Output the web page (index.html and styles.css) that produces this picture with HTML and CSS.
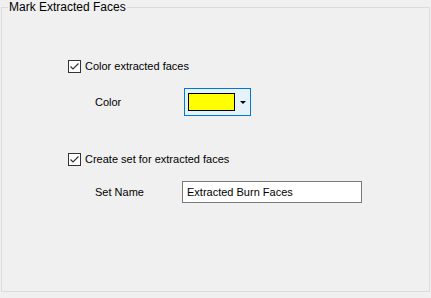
FILE: index.html
```html
<!DOCTYPE html>
<html>
  <head>
    <meta charset="utf-8">
    <title>Mark Extracted Faces</title>
    <link rel="stylesheet" href="styles.css">
  </head>
  <body>
    <fieldset class="group">
      <legend>Mark Extracted Faces</legend>
      <div class="check-row first">
        <span class="check"><svg width="11" height="11" viewBox="0 0 11 11"><path d="M1.5 5.5 L4 8 L9.5 2.5" fill="none" stroke="#333" stroke-width="1.2"/></svg></span>
        <span>Color extracted faces</span>
      </div>
      <div class="field-row color-row">
        <span class="field-label">Color</span>
        <div class="color-pick">
          <span class="swatch"></span>
          <span class="arrow"></span>
        </div>
      </div>
      <div class="check-row second">
        <span class="check"><svg width="11" height="11" viewBox="0 0 11 11"><path d="M1.5 5.5 L4 8 L9.5 2.5" fill="none" stroke="#333" stroke-width="1.2"/></svg></span>
        <span>Create set for extracted faces</span>
      </div>
      <div class="field-row name-row">
        <span class="field-label">Set Name</span>
        <div class="text-box">Extracted Burn Faces</div>
      </div>
    </fieldset>
  </body>
</html>
```

FILE: styles.css
```css
*, *::before, *::after {
  box-sizing: border-box;
}

body {
  margin: 0;
  background: #f0f0f0;
  color: #000;
  font: 11px "Liberation Sans", Arial, sans-serif;
}

.group {
  margin: 0 0 0 1px;
  padding: 0;
  width: 429px;
  height: 292px;
  border: 1px solid #dcdcdc;
}
.group legend {
  margin-left: 6px;
  padding: 0 1px;
  line-height: 14px;
  font-size: 12px;
}

.check-row {display: flex; align-items: center; height: 14px; padding-left: 66px;}
.check-row.first {margin-top: 45px;}
.check-row.second {margin-top: 36px;}
.check {
  width: 13px;
  height: 13px;
  border: 1px solid #333;
  background: #fff;
  margin-right: 4px;
  display: flex;
  align-items: center;
  justify-content: center;
}
.check svg {display: block;}

.field-row {display: flex; align-items: center; padding-left: 93px;}
.field-label {width: 89px;}
.color-row {margin-top: 15px; height: 28px;}
.name-row {margin-top: 15px; height: 22px;}

.color-pick {
  width: 67px;
  height: 28px;
  border: 1px solid #0078d7;
  background: #e5f1fb;
  display: flex;
  align-items: center;
  padding-left: 3px;
}
.swatch {width: 47px; height: 18px; border: 1px solid #000; background: #ffff00;}
.arrow {
  margin: 1px 0 0 5px;
  width: 0;
  height: 0;
  border-left: 3px solid transparent;
  border-right: 3px solid transparent;
  border-top: 3px solid #000;
}

.text-box {
  margin-left: -2px;
  width: 180px;
  height: 22px;
  border: 1px solid #7a7a7a;
  background: #fff;
  padding: 4px 0 0 4px;
}
```
